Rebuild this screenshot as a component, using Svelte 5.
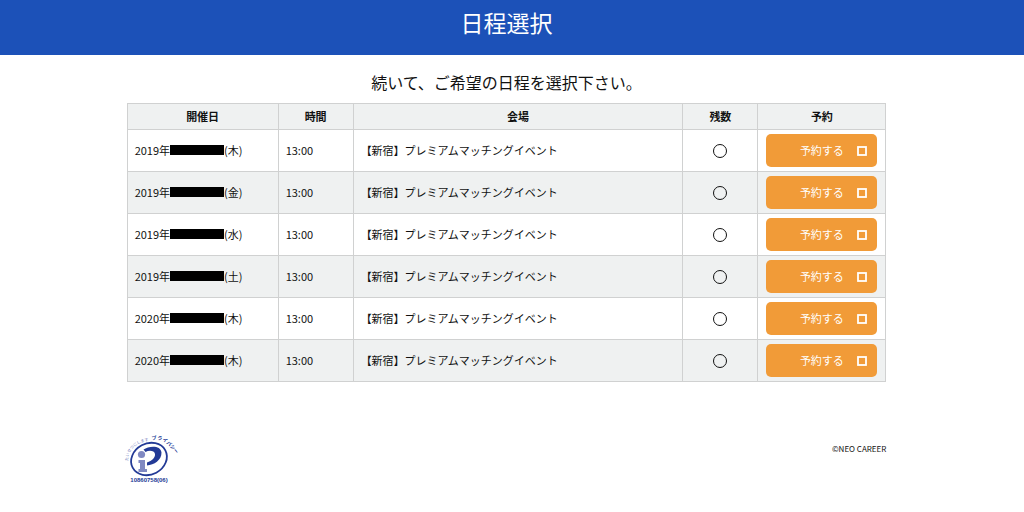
<script>
  const schedules = [
    { id: 1, year: 2019, weekday: '木', time: '13:00' },
    { id: 2, year: 2019, weekday: '金', time: '13:00' },
    { id: 3, year: 2019, weekday: '水', time: '13:00' },
    { id: 4, year: 2019, weekday: '土', time: '13:00' },
    { id: 5, year: 2020, weekday: '木', time: '13:00' },
    { id: 6, year: 2020, weekday: '木', time: '13:00' }
  ];

  const venue = '【新宿】プレミアムマッチングイベント';
</script>

<header class="page-header">
  <h1>日程選択</h1>
</header>

<div class="page">
  <main class="container">
    <p class="lead">続いて、ご希望の日程を選択下さい。</p>

    <table>
      <colgroup>
        <col class="col-date" />
        <col class="col-time" />
        <col />
        <col class="col-rest" />
        <col class="col-reserve" />
      </colgroup>
      <thead>
        <tr>
          <th scope="col">開催日</th>
          <th scope="col">時間</th>
          <th scope="col">会場</th>
          <th scope="col">残数</th>
          <th scope="col">予約</th>
        </tr>
      </thead>
      <tbody>
        {#each schedules as item (item.id)}
          <tr>
            <td>
              <div class="date">
                <span>{item.year}年</span>
                <span class="mask"></span>
                <span>({item.weekday})</span>
              </div>
            </td>
            <td>{item.time}</td>
            <td>{venue}</td>
            <td class="rest">
              <svg viewBox="0 0 14 14" role="img" aria-label="空きあり">
                <circle cx="7" cy="7" r="6.5" fill="none" stroke="#111" stroke-width="1" />
              </svg>
            </td>
            <td class="action">
              <button type="button" class="reserve">
                <span>予約する</span>
                <svg viewBox="0 0 10 10" aria-hidden="true">
                  <rect x="1" y="1" width="8" height="8" fill="none" stroke="#fff" stroke-width="1.8" />
                </svg>
              </button>
            </td>
          </tr>
        {/each}
      </tbody>
    </table>
  </main>

  <footer class="container footer">
    <a href="#privacy" aria-label="プライバシーマーク">
      <svg class="privacy-mark" viewBox="0 0 48 50">
        <defs>
          <path id="arc-left" d="M1.5 27 C0 17 9 7.5 25 6.5" />
          <path id="arc-right" d="M25 6.5 C33 4 39 7 49 20" />
        </defs>
        <text class="mark-soft"><textPath href="#arc-left">たいせつにします</textPath></text>
        <text class="mark-bold"><textPath href="#arc-right">プライバシー</textPath></text>
        <ellipse cx="22" cy="25" rx="18.5" ry="15.5" transform="rotate(-28 22 25)" fill="none" stroke="#233a96" stroke-width="1.8" />
        <circle cx="14.5" cy="20.5" r="3.6" fill="#8089c2" />
        <path d="M11.5 26 h6.5 v9 h2 v3 h-8.500 v-3 h1.500 v-6 h-1.500z" fill="#8089c2" />
        <path d="M16.5 15.5 C22 11.5 34 11 34.500 18.500 C34.700 26 27 31 20 31.500 L20 28.500 C25 27 28.500 23.500 28 20 C27.500 16.500 22 16 18.500 18z" fill="#233a96" />
        <text class="mark-number" x="22" y="48" text-anchor="middle">10860758(06)</text>
      </svg>
    </a>
    <small>©NEO CAREER</small>
  </footer>
</div>

<style>
  :global(body) {
    background: #fff;
    color: #111;
    font-family: "Noto Sans CJK JP", "Noto Sans", sans-serif;
    font-size: 11px;
    line-height: 16px;
  }

  .page-header {
    background: #1c51b8;
    color: #fff;
    padding: 6px 11px 17px 0;
    text-align: center;
  }

  h1 {
    margin: 0;
    font-size: 23px;
    font-weight: 400;
    line-height: 32px;
  }

  .page {
    padding-right: 11px;
  }

  .container {
    width: 75%;
    min-width: 600px;
    margin: 0 auto;
  }

  .lead {
    margin: 0;
    padding: 15px 0 9px;
    font-size: 16px;
    line-height: 24px;
    text-align: center;
  }

  table {
    width: 100%;
    border-collapse: collapse;
    table-layout: fixed;
  }

  .col-date {
    width: 151px;
  }

  .col-time,
  .col-rest {
    width: 75px;
  }

  .col-reserve {
    width: 128px;
  }

  th,
  td {
    border: 1px solid #d0d1d1;
    padding: 3px 7px 5px;
    text-align: left;
  }

  th {
    height: 17px;
    background: #eff1f1;
    font-weight: 700;
    text-align: center;
  }

  td {
    height: 33px;
  }

  tbody tr:nth-child(even) {
    background: #eff1f1;
  }

  .date {
    display: flex;
    align-items: center;
  }

  .mask {
    width: 54px;
    height: 10px;
    background: #000;
  }

  .rest {
    padding: 4px 7px;
    text-align: center;
  }

  .rest svg {
    display: block;
    width: 14px;
    height: 14px;
    margin: 0 auto;
  }

  .action {
    padding: 4px 8px;
  }

  .reserve {
    display: grid;
    grid-template-columns: 1fr auto 1fr;
    align-items: center;
    width: 100%;
    height: 33px;
    padding: 0 10px;
    border: none;
    border-radius: 5px;
    background: #f19b38;
    color: #fff;
    font-family: inherit;
    font-size: 11px;
    line-height: 16px;
    cursor: pointer;
  }

  .reserve span {
    grid-column: 2;
    padding-bottom: 2px;
  }

  .reserve svg {
    width: 10px;
    height: 10px;
    justify-self: end;
  }

  .footer {
    display: flex;
    justify-content: space-between;
    align-items: flex-start;
    padding-top: 52px;
  }

  .footer small {
    padding-top: 7px;
    font-size: 8px;
    line-height: 16px;
  }

  .privacy-mark {
    display: block;
    width: 48px;
    height: 50px;
    overflow: visible;
  }

  .mark-soft {
    font-size: 4px;
    fill: #6d78ba;
  }

  .mark-bold {
    font-size: 5px;
    font-weight: 700;
    fill: #233a96;
  }

  .mark-number {
    font-family: "Liberation Sans", Arial, sans-serif;
    font-size: 6px;
    font-weight: 700;
    fill: #233a96;
  }
</style>
